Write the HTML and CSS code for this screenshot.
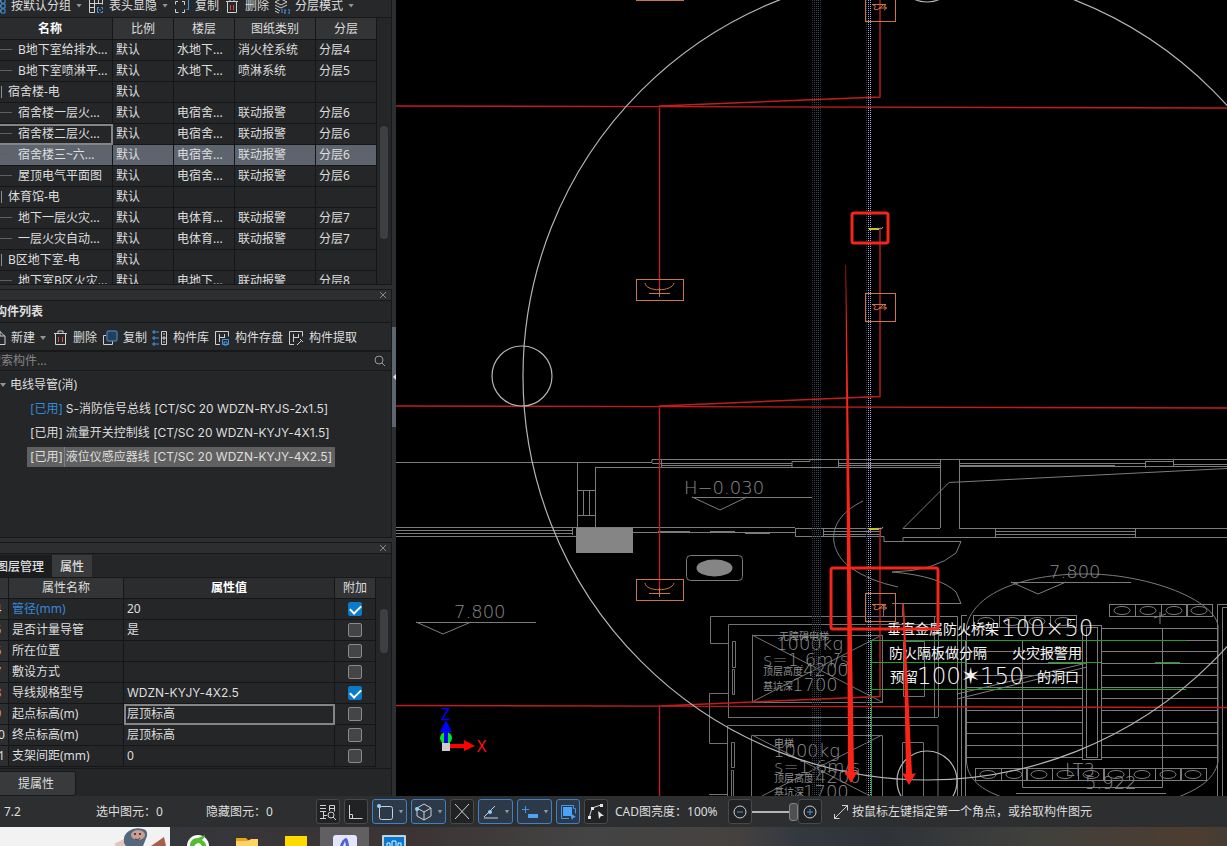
FILE: index.html
```html
<!DOCTYPE html>
<html lang="zh-CN">

<head>
    <meta charset="UTF-8">
    <meta name="viewport" content="width=device-width, initial-scale=1.0">
    <title>CAD</title>
    <link rel="stylesheet" href="styles.css">
</head>

<body>
    <div class="workspace">
        <aside class="sidebar">
            <!-- drawing list -->
            <section class="panel drawings">
                <div class="toolbar toolbar-top">
                    <button class="tool"><svg class="icon" viewBox="0 0 16 16"><path d="M5 3h6M5 13h6M5 3v10M5 8h6" /><path class="blue" d="M11 1h4v4h-4zM11 6h4v4h-4zM11 11h4v4h-4z" /></svg>按默认分组<i class="caret"></i></button>
                    <button class="tool"><svg class="icon" viewBox="0 0 16 16"><path d="M7 14.500H1.500V1.500h13v5M1 5.500h14M1 9.500h6M6.500 1v13M10.500 1v5" /><path class="blue" d="M9 9.500h2M13 9.500h1.500v2M14.500 13v1.500h-2M11 14.500H9.500v-5M11 12h2" /></svg>表头显隐<i class="caret"></i></button>
                    <button class="tool"><svg class="icon" viewBox="0 0 16 16"><path d="M4 3.500H1.500v3M1.500 11v3.500h3M8 14.500h2.500v-3M10.500 7V3.500H8" /><path class="blue" d="M5 .500h9.500v11h-2" /></svg>复制</button>
                    <button class="tool"><svg class="icon" viewBox="0 0 16 16"><path d="M2 3.500h12M3.500 4v10.500h9V4M6 4V1h4v3" /><path class="red" d="M6.500 7v5M9.500 7v5" /></svg>删除</button>
                    <button class="tool"><svg class="icon" viewBox="0 0 16 16"><path d="M7 1l6 3-6 3-6-3zM1 7l6 3 6-3M1 10l5 3M1 13l4 2" /><path class="blue" d="M8 11v4M10 12h2l-2 3h2M14 12h2v3h-2" /></svg>分层模式<i class="caret"></i></button>
                </div>
                <div class="scroll-row">
                    <table class="grid drawing-grid">
                        <colgroup><col class="w125"><col class="w61"><col class="w61"><col class="w81"><col class="w61"></colgroup>
                        <thead>
                            <tr><th class="strong">名称</th><th>比例</th><th>楼层</th><th>图纸类别</th><th>分层</th></tr>
                        </thead>
                        <tbody>
                            <tr><td class="leaf">B地下室给排水...</td><td>默认</td><td>水地下...</td><td>消火栓系统</td><td>分层4</td></tr>
                            <tr><td class="leaf">B地下室喷淋平...</td><td>默认</td><td>水地下...</td><td>喷淋系统</td><td>分层5</td></tr>
                            <tr><td class="group">宿舍楼-电</td><td>默认</td><td></td><td></td><td></td></tr>
                            <tr><td class="leaf">宿舍楼一层火...</td><td>默认</td><td>电宿舍...</td><td>联动报警</td><td>分层6</td></tr>
                            <tr><td class="leaf focused">宿舍楼二层火...</td><td>默认</td><td>电宿舍...</td><td>联动报警</td><td>分层6</td></tr>
                            <tr class="selected"><td class="leaf">宿舍楼三~六...</td><td>默认</td><td>电宿舍...</td><td>联动报警</td><td>分层6</td></tr>
                            <tr><td class="leaf">屋顶电气平面图</td><td>默认</td><td>电宿舍...</td><td>联动报警</td><td>分层6</td></tr>
                            <tr><td class="group">体育馆-电</td><td>默认</td><td></td><td></td><td></td></tr>
                            <tr><td class="leaf">地下一层火灾...</td><td>默认</td><td>电体育...</td><td>联动报警</td><td>分层7</td></tr>
                            <tr><td class="leaf">一层火灾自动...</td><td>默认</td><td>电体育...</td><td>联动报警</td><td>分层7</td></tr>
                            <tr><td class="group">B区地下室-电</td><td>默认</td><td></td><td></td><td></td></tr>
                            <tr><td class="leaf">地下室B区火灾...</td><td>默认</td><td>电地下...</td><td>联动报警</td><td>分层8</td></tr>
                        </tbody>
                    </table>
                    <div class="scrollbar"><div class="thumb thumb-drawings"></div></div>
                </div>
            </section>

            <!-- component list -->
            <section class="panel components">
                <div class="dock-bar"><button class="close" aria-label="关闭"><svg viewBox="0 0 8 8"><path d="M1 1l6 6M7 1L1 7" /></svg></button></div>
                <h2 class="panel-title">构件列表</h2>
                <div class="toolbar toolbar-parts">
                    <button class="tool"><svg class="icon" viewBox="0 0 16 16"><path d="M2 1.500h8l5 5v8H2zM10 1v5h5" /></svg>新建<i class="caret"></i></button>
                    <button class="tool"><svg class="icon" viewBox="0 0 16 16"><path d="M2 3.500h13M3.500 4v10.500h10V4M6 4V1h5v3" /><path class="red" d="M6.500 7v5M10.500 7v5" /></svg>删除</button>
                    <button class="tool"><svg class="icon" viewBox="0 0 16 16"><rect class="blue tint" x="5" y="1" width="10" height="10" rx="1" /><path d="M4 5.500H1.500v9h9v-3" /></svg>复制</button>
                    <button class="tool"><svg class="icon" viewBox="0 0 16 16"><path d="M9.500 1.500h5v13h-5zM11 4h2M11 7h2v2h-2zM11 12h2" /><path class="blue" d="M1 1h2v2H1zM1 7h2v2H1zM1 13h2v2H1zM4 2h3M4 8h3M4 14h3" /></svg>构件库</button>
                    <button class="tool"><svg class="icon" viewBox="0 0 16 16"><path d="M6 14.500H1.500V1.500h13v5M5.500 12V4M5 7.500h6M10.500 4v3" /><path class="blue" d="M8.500 9.500h6v5h-6zM10 12h3v3h-3z" /></svg>构件存盘</button>
                    <button class="tool"><svg class="icon" viewBox="0 0 16 16"><path d="M6 14.500H1.500V1.500h13v5M5.500 12V4M5 7.500h6M10.500 4v3M9 15l5-5M12 9l3 3" /></svg>构件提取</button>
                </div>
                <label class="search">
                    <input type="text" placeholder="搜索构件..." aria-label="搜索构件">
                    <svg viewBox="0 0 12 12"><circle cx="5" cy="5" r="4" /><path d="M8 8l3 3" /></svg>
                </label>
                <div class="tree">
                    <div class="tree-root"><i class="caret"></i>电线导管(消)</div>
                    <div class="tree-item"><span class="used blue-text">[已用]</span><span>S-消防信号总线 [CT/SC 20 WDZN-RYJS-2x1.5]</span></div>
                    <div class="tree-item"><span class="used">[已用]</span><span>流量开关控制线 [CT/SC 20 WDZN-KYJY-4X1.5]</span></div>
                    <div class="tree-item current"><span class="used">[已用]</span><span>液位仪感应器线 [CT/SC 20 WDZN-KYJY-4X2.5]</span></div>
                </div>
            </section>

            <!-- properties -->
            <section class="panel properties">
                <div class="dock-bar"><button class="close" aria-label="关闭"><svg viewBox="0 0 8 8"><path d="M1 1l6 6M7 1L1 7" /></svg></button></div>
                <div class="tabs">
                    <button class="tab">图层管理</button>
                    <button class="tab active">属性</button>
                </div>
                <div class="scroll-row">
                    <table class="grid prop-grid">
                        <colgroup><col class="w21"><col class="w115"><col class="w211"><col class="w41"></colgroup>
                        <thead>
                            <tr><th></th><th>属性名称</th><th class="strong">属性值</th><th>附加</th></tr>
                        </thead>
                        <tbody>
                            <tr><td class="num">4</td><td class="blue-text">管径(mm)</td><td>20</td><td class="check"><input type="checkbox" aria-label="管径" checked></td></tr>
                            <tr><td class="num orange">5</td><td>是否计量导管</td><td>是</td><td class="check"><input type="checkbox" aria-label="是否计量导管"></td></tr>
                            <tr><td class="num orange">6</td><td>所在位置</td><td></td><td class="check"><input type="checkbox" aria-label="所在位置"></td></tr>
                            <tr><td class="num orange">7</td><td>敷设方式</td><td></td><td class="check"><input type="checkbox" aria-label="敷设方式"></td></tr>
                            <tr><td class="num orange">8</td><td>导线规格型号</td><td class="spec">WDZN-KYJY-4X2.5</td><td class="check"><input type="checkbox" aria-label="导线规格型号" checked></td></tr>
                            <tr><td class="num orange">9</td><td>起点标高(m)</td><td class="focused">层顶标高</td><td class="check"><input type="checkbox" aria-label="起点标高"></td></tr>
                            <tr><td class="num">10</td><td>终点标高(m)</td><td>层顶标高</td><td class="check"><input type="checkbox" aria-label="终点标高"></td></tr>
                            <tr><td class="num">11</td><td>支架间距(mm)</td><td>0</td><td class="check"><input type="checkbox" aria-label="支架间距"></td></tr>
                        </tbody>
                    </table>
                    <div class="scrollbar"><div class="thumb thumb-props"></div></div>
                </div>
                <div class="panel-foot"><button class="extract">提属性</button></div>
            </section>
        </aside>
        <div class="splitter"><button class="collapse" aria-label="收起"></button></div>

        <main class="canvas">
            <svg viewBox="396 0 831 796" preserveAspectRatio="xMinYMin slice">
                <defs>
                    <g id="oval"><rect x=".500" y=".500" width="26" height="12" /><ellipse cx="13" cy="6.500" rx="8" ry="4" /></g>
                    <g id="lamp"><rect x="636.500" y="279.500" width="47" height="21" /><path d="M645 283c1 9 27 9 29 0M649 293.500h21M659.500 288v9" /></g>
                    <g id="relay"><rect x="865.500" y="293.500" width="30" height="28" /><path d="M872 304.500h14M873 305q4 0 1 4q3 2 6-1l3-3M886 305q-4 1-1 2q3 1-1 3M879 308h8" /></g>
                </defs>

                <!-- walls -->
                <g class="wall">
                    <path d="M396 462.500H652V459.500H940M652 463.500H792M595.500 467.500H940M577.500 463V528M595.500 467V528M577 490.500H596M577 515.500H596M583.500 490V515M589.500 490V515" />
                    <path d="M661.500 459v8M661 465.500H792M792 467V461.500H810V459M838.500 459V467M838 463.500H940M838 465.500H940M940.500 459V528M959.500 459V528" />
                    <path d="M940 459.500H1227M959 463.500H1145M959 466.500H1227M959 465.500H1115M1145.500 461V468M1145 461.500H1173M1173.500 460V467M1173 464.500H1227" />
                    <path d="M396 527.500H795M396 530.500H572M396 533.500H572M396 536.500H577M572.500 528V535M633 532.500H795M658 531.500H690M710 531.500H735M745 533.500H770M795.500 528V536.500H880M795 528.500H880M823.500 528V536M823 531.500H880M823 534.500H880M880.500 528V536" />
                    <path d="M880 536.500H884V541.500H961L956 553Q935 571 892 572Q940 576 956 592L961 603.500H892M903 541V537.500H1227M903 528.500L949 482.500L1227 468.500M903 528.500H940M959 528.500H1227M995.500 528V537M1135.500 528V537M995 531.500H1135M995 534.500H1135" />
                    <path d="M863 501C824 520 828 551 851 568Q870 581 898 587" />
                    <path d="M692 497.500H812M692 497L720 510L747 497M416 622.500H536M416 622L443 634L471 622M1011 582.500H1131M1011 582L1038 594L1066 582M1016 793.500H1166" />
                    <rect x="686.500" y="555.500" width="56" height="25" rx="4" />
                </g>
                <rect class="solid" x="576" y="528" width="57" height="25" />
                <ellipse class="solid" cx="714.500" cy="568" rx="18" ry="8.500" />

                <!-- lifts -->
                <g class="wall dim">
                    <path d="M728 643.500H710.500V616.500H936M728 693.500H709.500V743.500H728M728 794.500H709M728.500 717V624.500H938M728 717.500H938M727.500 796V725.500H938V796M934.500 616V717M938.500 604V717M902.500 604V616M883.500 604V616" />
                    <rect x="752.500" y="635.500" width="130" height="67" />
                    <path d="M752 635L882 702M882 635L752 702M751.500 796V735.500H882.500V796M752 735L870 796M882 735L762 796" />
                    <path d="M732.500 641.500h3v26h-3zM732.500 669.500h2v25h-2zM731.500 742.500h3v25h-3zM731.500 770.500h2v26h-2zM903.500 641.500h21v55h-21zM902.500 742.500h21v60h-21z" />
                </g>

                <!-- staircase -->
                <g class="wall">
                    <path d="M966.500 626C975 590 1030 573 1090 574C1150 575 1215 600 1218 626V762C1214 781 1196 790 1176 798M966.500 626V762C968 780 982 790 1002 797" />
                    <path d="M957.500 796V616.500H940M961.500 796V615.500H967M965.500 796V640M1217.500 796V604.500H1227M1222.500 796V607.500H1227" />
                    <rect x="1082.500" y="625.500" width="19" height="134" />
                    <rect x="1086.500" y="627.500" width="11" height="130" />
                    <path d="M1022.500 640V787.500H1162.500V628M957 694L1087 663M957 699L1087 667M1160 612v12M1154 618l12-4" />
                    <path d="M967 640.500H1082M967 651.500H1082M967 663.500H1082M967 675.500H1082M967 687.500H1082M967 698.500H1082M967 710.500H1082M967 722.500H1082M967 733.500H1082M967 745.500H1082M967 757.500H1082" />
                    <path d="M1102 628.500H1217M1102 640.500H1217M1102 651.500H1217M1102 663.500H1217M1102 675.500H1217M1102 687.500H1217M1102 698.500H1217M1102 710.500H1217M1102 722.500H1217M1102 733.500H1217M1102 745.500H1217M1102 757.500H1217" />
                    <use href="#oval" x="973" y="615" /><use href="#oval" x="999" y="615" /><use href="#oval" x="1024" y="615" /><use href="#oval" x="1050" y="615" />
                    <use href="#oval" x="1109" y="604" /><use href="#oval" x="1135" y="604" /><use href="#oval" x="1161" y="604" /><use href="#oval" x="1186" y="604" />
                    <use href="#oval" x="975" y="768" /><use href="#oval" x="1001" y="768" /><use href="#oval" x="1026" y="768" /><use href="#oval" x="1052" y="768" /><use href="#oval" x="1078" y="768" /><use href="#oval" x="1103" y="768" /><use href="#oval" x="1129" y="768" /><use href="#oval" x="1155" y="768" /><use href="#oval" x="1180" y="768" />
                </g>

                <!-- grey labels -->
                <g class="label">
                    <text x="684" y="494">H−0.030</text>
                    <text x="454" y="618">7.800</text>
                    <text x="1049" y="578">7.800</text>
                    <text x="776" y="650">1000kg</text>
                    <text x="763" y="666">s=1.6m/s</text>
                    <text x="803" y="676">4200</text>
                    <text x="792" y="691">1700</text>
                    <text x="773" y="757">1000kg</text>
                    <text x="774" y="773">s=1.6m/s</text>
                    <text x="815" y="783">4200</text>
                    <text x="803" y="798">1700</text>
                    <text x="1065" y="776">LT3</text>
                    <text x="1085" y="789">5.922</text>
                </g>
                <g class="label-cn">
                    <text x="779" y="640">无障碍电梯</text>
                    <text x="763" y="675">顶层高度</text>
                    <text x="763" y="690">基坑深</text>
                    <text x="774" y="747">电梯</text>
                    <text x="774" y="782">顶层高度</text>
                    <text x="774" y="796">基坑深</text>
                </g>

                <!-- cable lines -->
                <g class="riser">
                    <path d="M812.500 0V796M820.500 0V796" />
                    <path class="warm" d="M814.500 0V796M816.500 0V796" />
                    <path class="teal" d="M818.500 0V796" />
                    <path d="M866.500 0V796" />
                    <path class="bright" d="M868.500 0V796M870.500 0V796" />
                </g>
                <g class="wire">
                    <path d="M396 106L1227 108M659 106L880 97V0M659.500 106V291" />
                    <path d="M396 406L1227 408M659 406L880 396.500V229M659.500 406V590" />
                    <path d="M396 705.500L1227 707.500M659 706L880 696.500V529M659.500 706V796" />
                    <path class="faint" d="M903 604L906 660" />
                </g>
                <g class="device">
                    <use href="#lamp" /><use href="#lamp" y="300" /><use href="#lamp" y="-300" />
                    <use href="#relay" /><use href="#relay" y="300" /><use href="#relay" y="-300" />
                </g>
                <g class="green">
                    <path d="M871.500 796V640.500H1186M871 662.500H967M1048 662.500H1101M1155 662.500H1180M871 689.500H1186" />
                </g>
                <path class="yellow" d="M869 229H879M869 529H879" />
                <path class="tick" d="M877 228q2 2 3 0q2 2 3-1M877 528q2 2 3 0q2 2 3-1" />
                <g class="note">
                    <text x="887" y="634">垂直金属防火桥架</text>
                    <text x="889" y="658">防火隔板做分隔</text>
                    <text x="1012" y="658">火灾报警用</text>
                    <text x="890" y="682">预留</text>
                    <text x="1037" y="682">的洞口</text>
                    <text class="wide" x="1001" y="636">100×50</text>
                    <text class="wide" x="917" y="684">100✶150</text>
                </g>

                <!-- pump circles -->
                <g class="circle">
                    <circle cx="927" cy="376" r="404" />
                    <circle cx="522" cy="376" r="30" />
                    <circle cx="927" cy="-28" r="30" />
                    <circle cx="927" cy="781" r="30" />
                </g>

                <!-- red markup -->
                <g class="markup">
                    <rect x="852" y="213" width="36" height="30" rx="2" />
                    <rect x="831" y="568" width="107" height="61" rx="2" />
                    <path d="M845.500 265L846 265L854 772L858 771L851 783L844 771L848 772Z" />
                    <path d="M903 604L904 604L912 774L916 773L909 785L902 773L906 774Z" />
                </g>

                <!-- axis -->
                <circle cx="446" cy="738" r="6" fill="#00e626" />
                <path fill="#0000ff" d="M444 743V732H440L446 720L452 732H448V743Z" />
                <path fill="#ff0000" d="M450 744H464V740L475 746L464 751V748H450Z" />
                <rect x="442" y="743" width="8" height="8" fill="#cccccc" />
                <text class="axis" x="441" y="720" fill="#0000ff">Z</text>
                <text class="axis" x="477" y="752" fill="#ff1010">X</text>
            </svg>
        </main>
    </div>

    <footer class="status">
        <span class="coord">7.2</span>
        <span class="count">选中图元：0</span>
        <span class="count">隐藏图元：0</span>
        <div class="status-tools">
            <button class="sbtn" aria-label="识别"><svg viewBox="0 0 18 18"><path d="M1 2.500h6M1 5.500h6M1 8.500h6M4.500 9v6M1 15.500h6M4 12.500h4M10.500 8V2.500h5v6M10 5.500h5" /><circle cx="12" cy="12" r="3" /><path d="M14 14l3 3" /></svg></button>
            <button class="sbtn" aria-label="正交"><svg viewBox="0 0 18 18"><path d="M2.500 2v13.500h13M2 11.500h3.500v4" /></svg></button>
            <button class="sbtn on drop" aria-label="框选"><svg viewBox="0 0 18 18"><rect x="3.500" y="3.500" width="13" height="13" rx="2" /><circle class="dot" cx="3" cy="3" r="2" /></svg><i class="caret"></i></button>
            <button class="sbtn on drop" aria-label="视图"><svg viewBox="0 0 18 18"><path d="M9 1l7 4v8l-7 4-7-4V5zM2 5l7 4 7-4M9 9v8" /><circle class="dot" cx="2" cy="6" r="2" /></svg><i class="caret"></i></button>
            <button class="sbtn" aria-label="交点"><svg viewBox="0 0 18 18"><path d="M2 1l14 15M16 1L2 16" /></svg></button>
            <button class="sbtn on drop" aria-label="角度"><svg viewBox="0 0 18 18"><path d="M2 14L13 3M2 15h14" /><circle class="dot" cx="8" cy="9" r="2" /></svg><i class="caret"></i></button>
            <button class="sbtn on drop" aria-label="偏移"><svg viewBox="0 0 18 18"><path class="blue" d="M1 6.500h7M4.500 3v7" /><rect class="fill-blue" x="7" y="11" width="10" height="4" /></svg><i class="caret"></i></button>
            <button class="sbtn on" aria-label="选择"><svg viewBox="0 0 18 18"><rect class="fill-blue" x="4" y="4" width="9" height="9" /><path class="blue" d="M10 15.500H2.500V2.500h12v3h2v5" /><path class="fill-blue" d="M11 10l6 4-3 1-1 2z" /></svg></button>
            <button class="sbtn" aria-label="折线"><svg viewBox="0 0 18 18"><path d="M2 15L5 5L14 2" /><path class="fill-white" d="M1 13h3v3H1zM4 4h3v3H4zM13 1h3v3h-3zM11 8l6 5-3 0-2 3z" /></svg></button>
        </div>
        <label class="bright-label" for="brightness">CAD图亮度：100%</label>
        <div class="zoomer">
            <button class="sbtn" aria-label="减"><svg viewBox="0 0 18 18"><circle cx="9" cy="9" r="6" /><path class="blue" d="M6 9h6" /></svg></button>
            <input type="range" id="brightness" min="0" max="100" value="100">
            <button class="sbtn" aria-label="加"><svg viewBox="0 0 18 18"><circle cx="9" cy="9" r="6" /><path class="blue" d="M6 9h6M9 6v6" /></svg></button>
        </div>
        <div class="hint"><svg viewBox="0 0 16 16"><path d="M1 15L15 1M9 1.500h5.500v5M1.500 10v4.500h5" /></svg>按鼠标左键指定第一个角点，或拾取构件图元</div>
    </footer>

    <div class="taskbar">
        <div class="widget">
            <svg viewBox="0 0 56 19"><path d="M0 17l12-6 5 3 6 5H2z" fill="#e3c5bd" /><path d="M10 16Q9 7 15 4Q20 0 29 2Q34 3 33 9L29 19H12Z" fill="#53677f" /><ellipse cx="24" cy="8" rx="7" ry="5" fill="#c79e91" /><circle cx="21" cy="7" r="1" fill="#222" /><circle cx="26" cy="7" r="1" fill="#222" /><path d="M21 12q3 2 5-1" stroke="#633" fill="none" /><path d="M37 19L50 10L52 19Z" fill="#a95e4c" /></svg>
        </div>
        <div class="apps">
            <div class="app"><svg viewBox="0 0 24 11"><circle cx="12" cy="11" r="11" fill="#fff" /><path d="M4 11Q4 3 12 3L19 0Q18 4 16 5Q20 7 20 11H16Q13 5 8 11Z" fill="#56bb35" /></svg></div>
            <div class="app"><svg viewBox="0 0 24 11"><path d="M1 3h10l2 2h10v6H1z" fill="#e5a51c" /><path d="M1 6h12l3-2h7v7H1z" fill="#ffd266" /></svg></div>
            <div class="app"><svg viewBox="0 0 24 11"><path d="M1 1h22v10H1z" fill="#ffd900" /></svg></div>
            <div class="app open"><svg viewBox="0 0 24 11"><rect width="24" height="18" rx="3" fill="#e2e5fb" /><path d="M7 11Q9 4 13 3Q15 3 16 11H13L12 6L10 11Z" fill="#5261cc" /></svg></div>
            <div class="app"><svg viewBox="0 0 24 11"><rect width="24" height="14" rx="1" fill="#c3d1dd" /><path d="M2 2h20v9H2z" fill="#0878d1" /><path d="M5 11V8h3v3M10 11V6h4v5M16 11V8h3v3" stroke="#e7f4ff" fill="none" /></svg></div>
        </div>
    </div>
</body>

</html>
```
FILE: styles.css
```css
* {
    box-sizing: border-box;
}

body {
    margin: 0;
    height: 100vh;
    display: flex;
    flex-direction: column;
    overflow: hidden;
    background: #2c2e30;
    color: #dedede;
    font-family: "Noto Sans", "Noto Sans CJK SC", sans-serif;
    font-size: 12px;
    line-height: 20px;
}

button,
input {
    font: inherit;
    color: inherit;
    margin: 0;
    padding: 0;
    border: 0;
    background: none;
}

svg {
    display: block;
    fill: none;
    stroke: #d0d0d0;
    flex: none;
}

.blue {
    stroke: #3f97e6;
}

.red {
    stroke: #d94a4a;
}

.tint {
    fill: #243f58;
}

.blue-text {
    color: #3589d8;
}

.caret {
    width: 6px;
    height: 4px;
    flex: none;
    background: #949494;
    clip-path: polygon(0 0, 100% 0, 50% 100%);
}

.workspace {
    flex: 1;
    min-height: 0;
    display: flex;
}

/* left docks, scrolled a little past the window edge */
.sidebar {
    width: 404px;
    margin-left: -12px;
    flex: none;
    display: flex;
    flex-direction: column;
    background: #2c2e30;
}

.panel {
    background: #242628;
    border-right: 1px solid #17181a;
    display: flex;
    flex-direction: column;
}

.drawings {
    height: 285px;
    border-bottom: 1px solid #17181a;
    overflow: hidden;
}

.components {
    flex: 1;
    margin: 4px 0;
    border-top: 1px solid #17181a;
    border-bottom: 1px solid #17181a;
}

.properties {
    height: 254px;
    border-top: 1px solid #17181a;
}

.toolbar {
    height: 28px;
    flex: none;
    display: flex;
    align-items: center;
    gap: 5px;
    padding: 1px 0 0 2px;
    border-bottom: 1px solid #17181a;
    background: #26282a;
}

.toolbar-top {
    height: 25px;
    margin-top: -7px;
}

.toolbar-parts {
    padding-top: 3px;
}

.tool {
    display: flex;
    align-items: center;
    gap: 5px;
    white-space: nowrap;
}

.tool .caret {
    margin-right: 1px;
}

.icon {
    width: 16px;
    height: 16px;
}

.scroll-row {
    flex: 1;
    min-height: 0;
    display: flex;
    overflow: hidden;
}

.grid {
    table-layout: fixed;
    border-collapse: separate;
    border-spacing: 0;
    flex: none;
    align-self: flex-start;
}

.drawing-grid {
    width: 389px;
}

.prop-grid {
    width: 388px;
}

.w125 { width: 125px; }
.w61 { width: 61px; }
.w81 { width: 81px; }
.w21 { width: 21px; }
.w115 { width: 115px; }
.w211 { width: 211px; }
.w41 { width: 41px; }

.grid th,
.grid td {
    height: 21px;
    padding: 0 0 0 3px;
    border-right: 1px solid #151618;
    border-bottom: 1px solid #151618;
    text-align: left;
    font-weight: 400;
    white-space: nowrap;
    overflow: hidden;
}

.grid th {
    background: #323436;
    text-align: center;
    padding: 0;
}

.drawing-grid th {
    padding-top: 1px;
}

.grid .strong {
    font-weight: 700;
    color: #ffffff;
    background: #2a2c2e;
}

.grid .leaf {
    padding-left: 30px;
    background: linear-gradient(#5d5f61, #5d5f61) 0 9px / 24px 1px no-repeat;
}

.grid .group {
    padding-left: 20px;
    background: linear-gradient(#8c8e90, #8c8e90) 13px 4px / 1px 12px no-repeat;
}

.grid .selected td {
    background-color: #5d646e;
}

.grid .focused {
    outline: 2px solid #858585;
    outline-offset: -2px;
}

.grid .num {
    padding: 0;
    text-align: center;
    background: #2c2e30;
}

.grid .orange {
    color: #d99a62;
}

.grid .check {
    padding: 0;
}

.check input {
    appearance: none;
    display: block;
    width: 14px;
    height: 14px;
    margin: 0 auto;
    border: 1px solid #8a8a8a;
    border-radius: 2px;
    background: #454545;
}

.check input:checked {
    border-color: #0a7acb;
    background: #0a7acb;
}

.check input:checked::before {
    content: "";
    display: block;
    width: 9px;
    height: 5px;
    margin: 2px 0 0 1px;
    border: solid #ffffff;
    border-width: 0 0 2px 2px;
    transform: rotate(-45deg);
}

/* wider latin for the cable codes, keep the plain x in 2x1.5 */
.tree-item,
.spec {
    font-family: Inter, "Noto Sans CJK SC", sans-serif;
    font-variant-ligatures: none;
    font-feature-settings: "calt" 0;
}

.scrollbar {
    flex: 1;
    background: #242628;
}

.thumb {
    width: 8px;
    margin: 0 auto;
    border-radius: 4px;
    background: #3d3f42;
}

.thumb-drawings {
    height: 113px;
    margin-top: 108px;
}

.thumb-props {
    height: 44px;
    margin-top: 31px;
}

.dock-bar {
    height: 11px;
    flex: none;
    display: flex;
    align-items: center;
    justify-content: flex-end;
    padding-right: 4px;
    background: #2c2e30;
    border-bottom: 1px solid #17181a;
}

.close svg {
    width: 8px;
    height: 8px;
    stroke: #888888;
}

.panel-title {
    margin: 0;
    padding-left: 7px;
    height: 22px;
    flex: none;
    font-size: 12px;
    line-height: 22px;
    font-weight: 700;
    border-bottom: 1px solid #17181a;
}

.search {
    height: 20px;
    flex: none;
    display: flex;
    align-items: center;
    padding: 0 5px 0 1px;
    border-top: 1px solid #17181a;
    border-bottom: 1px solid #17181a;
}

.search input {
    flex: 1;
    min-width: 0;
    height: 18px;
    outline: none;
}

.search input::placeholder {
    color: #858585;
}

.search svg {
    width: 12px;
    height: 12px;
    stroke: #999999;
}

.tree {
    padding: 2px 0 0 12px;
}

.tree-root {
    display: flex;
    align-items: center;
    gap: 4px;
    height: 24px;
}

.tree-item {
    display: flex;
    align-items: center;
    gap: 1px;
    width: max-content;
    height: 20px;
    margin: 2px 0 4px 27px;
    padding: 0 3px;
}

.tree-item.current {
    background: #606060;
}

.used {
    padding-right: 1px;
    border-right: 1px solid transparent;
}

.current .used {
    border-color: #808080;
}

.tabs {
    height: 24px;
    flex: none;
    display: flex;
    align-items: flex-end;
    border-bottom: 1px solid #17181a;
}

.tab {
    height: 22px;
    padding: 1px 8px 0;
    font-weight: 500;
    background: #1b1c1d;
}

.tab.active {
    background: #383a3c;
}

.panel-foot {
    height: 28px;
    flex: none;
    padding-top: 2px;
    border-top: 1px solid #17181a;
}

.extract {
    height: 25px;
    padding: 0 21px 0 29px;
    border: 1px solid #17181a;
    border-radius: 3px;
    background: #383a3c;
}

.splitter {
    width: 4px;
    flex: none;
    padding-top: 327px;
}

.collapse {
    display: flex;
    align-items: center;
    justify-content: flex-end;
    width: 4px;
    height: 100px;
    background: #5d6670;
}

.collapse::before {
    content: "";
    width: 3px;
    height: 6px;
    background: #e0e0e0;
    clip-path: polygon(100% 0, 100% 100%, 0 50%);
}

/* drawing area */
.canvas {
    flex: 1;
    min-width: 0;
    background: #000000;
    overflow: hidden;
}

.canvas svg {
    width: 100%;
    height: 100%;
    stroke: none;
}

.canvas .wall {
    stroke: #7c7c7c;
}

.canvas .dim {
    stroke: #727272;
}

.solid {
    fill: #858585;
}

.circle {
    stroke: #b4b4b4;
    stroke-width: 1.2px;
}

.label {
    fill: #8c8c8c;
    font-family: "DejaVu Sans", sans-serif;
    font-weight: 200;
    font-size: 18px;
}

.label-cn {
    fill: #929292;
    font-size: 10px;
}

.riser {
    stroke: #2a3a4c;
    stroke-dasharray: 1 1;
}

.riser .warm {
    stroke: #4a4040;
}

.riser .teal {
    stroke: #35505a;
}

.riser .bright {
    stroke: #a8a2e0;
}

.wire {
    stroke: #c01e1e;
    stroke-width: 1.4px;
}

.wire .faint {
    stroke: #7a1c1c;
}

.device {
    stroke: #c87645;
}

.green {
    stroke: #19a526;
}

.yellow {
    stroke: #c8c81e;
    stroke-width: 2px;
}

.tick {
    stroke: #aaaaaa;
}

.note {
    fill: #f4f4f4;
    font-size: 14px;
}

.note .wide {
    font-family: "DejaVu Sans", sans-serif;
    font-weight: 200;
    font-size: 23px;
}

.markup rect {
    stroke: #f4261c;
    stroke-width: 3px;
}

.markup path {
    fill: #fa2418;
}

.axis {
    font-size: 16px;
}

/* status bar */
.status {
    height: 31px;
    flex: none;
    display: flex;
    align-items: center;
    padding-left: 4px;
    background: #2c2e30;
    white-space: nowrap;
}

.coord {
    width: 92px;
}

.count {
    width: 110px;
}

.status-tools {
    display: flex;
    gap: 4px;
}

.sbtn {
    width: 24px;
    height: 25px;
    flex: none;
    display: flex;
    align-items: center;
    justify-content: center;
    gap: 5px;
    border: 1px solid #47494b;
    border-radius: 3px;
    background: #202224;
}

.sbtn svg {
    width: 18px;
    height: 18px;
}

.sbtn.on {
    border-color: #4080c4;
    background: #2b3949;
}

.sbtn.drop {
    width: 35px;
}

.sbtn .caret {
    width: 5px;
}

.dot {
    stroke: none;
    fill: #8fd0ff;
}

.fill-blue {
    stroke: none;
    fill: #4aa3f5;
}

.fill-white {
    stroke: none;
    fill: #e6e6e6;
}

.bright-label {
    width: 113px;
    margin-left: 7px;
}

.zoomer {
    display: flex;
    align-items: center;
}

.zoomer input {
    appearance: none;
    width: 46px;
    height: 18px;
    background: linear-gradient(#b8b3b8, #b8b3b8) center / 100% 2px no-repeat;
}

.zoomer input::-webkit-slider-thumb {
    appearance: none;
    width: 9px;
    height: 18px;
    border: 1px solid #858585;
    border-radius: 3px;
    background: #505050;
}

.hint {
    display: flex;
    align-items: center;
    gap: 3px;
    margin-left: 11px;
}

.hint svg {
    width: 16px;
    height: 16px;
}

/* system taskbar */
.taskbar {
    height: 19px;
    flex: none;
    display: flex;
    background: linear-gradient(90deg, #35363b 14%, #3c3434 34%, #444444 48%, #45413f 60%, #343940 65%, #2f3338 72%, #40403d 84%, #4d3d30 97%, #453c34);
}

.widget {
    width: 170px;
    display: flex;
    justify-content: flex-end;
    background: #f2f2f2;
}

.widget svg {
    width: 56px;
    height: 19px;
    stroke: none;
}

.apps {
    display: flex;
    padding-left: 3px;
}

.app {
    width: 49px;
    display: flex;
    align-items: flex-end;
    justify-content: center;
}

.app.open {
    background: #625f62;
}

.app svg {
    width: 24px;
    height: 11px;
    stroke: none;
}
```
